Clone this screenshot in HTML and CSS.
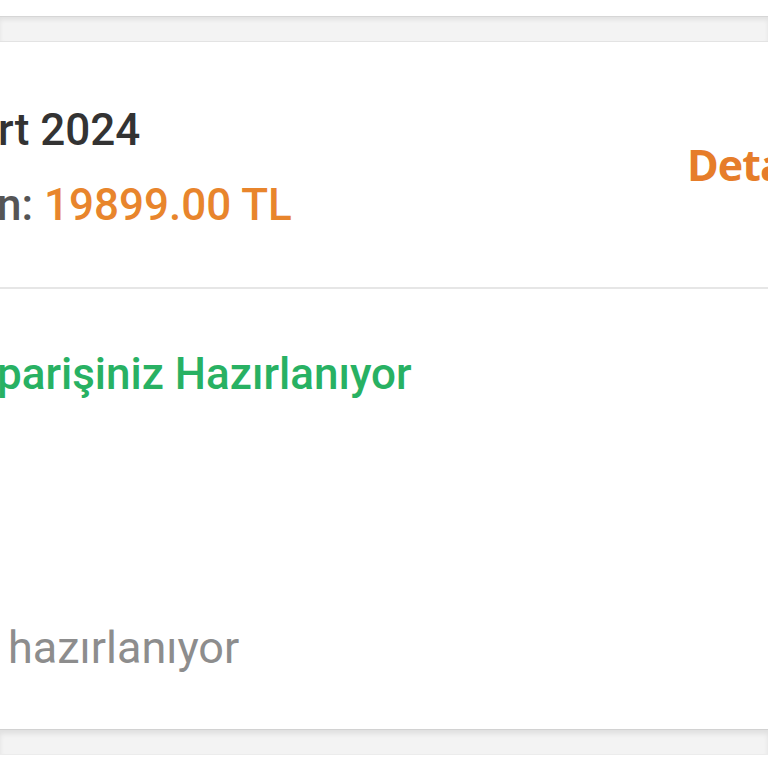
FILE: index.html
```html
<!DOCTYPE html>
<html lang="tr">
<head>
<meta charset="utf-8">
<title>Siparişlerim</title>
<link rel="stylesheet" href="styles.css">
</head>
<body>
<div class="page">
  <div class="gap-top"></div>
  <div class="band"></div>
  <section class="card">
    <div class="head">
      <div class="info">
        <div class="date">rt 2024</div>
        <div class="total"><span class="label">n: </span><span class="amount">19899.00 TL</span></div>
      </div>
      <a class="detail">Detaylar</a>
    </div>
    <div class="divider"></div>
    <div class="body">
      <div class="status">parişiniz Hazırlanıyor</div>
      <div class="spacer"></div>
      <div class="note">hazırlanıyor</div>
    </div>
  </section>
  <div class="band band-bottom"></div>
</div>
</body>
</html>
```

FILE: styles.css
```css
html, body {
  margin: 0;
  padding: 0;
  width: 768px;
  height: 768px;
  overflow: hidden;
  background: #ffffff;
}

.page {
  width: 768px;
  height: 768px;
  overflow: hidden;
  font-family: Roboto, "Liberation Sans", sans-serif;
}

.gap-top {
  height: 16px;
}

.band {
  height: 26px;
  box-sizing: border-box;
  background: #f3f3f3;
  border-top: 1px solid #d6d6d6;
  border-bottom: 1px solid #e3e3e3;
  box-shadow: inset 0 3px 4px rgba(0, 0, 0, 0.07);
}

.band-bottom {
  border-top: 1px solid #d2d2d2;
  border-bottom: 1px solid #ececec;
  box-shadow: inset 0 4px 5px rgba(0, 0, 0, 0.08);
}

.card {
  background: #ffffff;
  height: 687px;
  margin-left: -3px;
  width: 1000px;
  display: flex;
  flex-direction: column;
}

.head {
  height: 245px;
  box-sizing: border-box;
  padding-top: 51px;
  padding-bottom: 44px;
  display: flex;
  align-items: center;
}

.info {
  flex: 0 0 690px;
  display: flex;
  flex-direction: column;
}

.date {
  font-size: 44px;
  line-height: 75px;
  font-weight: 500;
  color: #333333;
  margin-left: 1px;
}

.total {
  font-size: 44px;
  line-height: 75px;
  font-weight: 500;
  white-space: nowrap;
}

.label {
  color: #555555;
}

.amount {
  color: #e8852c;
  font-weight: 500;
}

.detail {
  flex: none;
  font-family: "Open Sans", "Noto Sans", sans-serif;
  font-weight: 700;
  font-size: 43px;
  letter-spacing: -1px;
  line-height: 60px;
  color: #e67d2a;
  white-space: nowrap;
  margin-bottom: 6px;
}

.divider {
  height: 2px;
  background: #e6e6e6;
}

.body {
  flex: 1;
  padding-top: 48px;
  display: flex;
  flex-direction: column;
}

.status {
  font-size: 44px;
  line-height: 75px;
  font-weight: 500;
  color: #28b163;
  white-space: nowrap;
}

.spacer {
  height: 198px;
}

.note {
  font-size: 45px;
  line-height: 75px;
  font-weight: 400;
  color: #8d8d8d;
  padding-left: 11px;
  white-space: nowrap;
}
```
